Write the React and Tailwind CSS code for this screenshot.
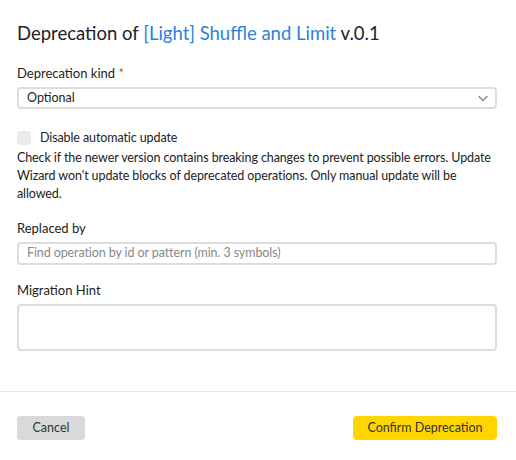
export default function App() {
  return (
    <div className="w-[516px] h-[460px] bg-white text-[#222] flex flex-col" style={{ fontFamily: 'Lato, "Open Sans", sans-serif' }}>
      <div className="pl-[17px] pr-[19px] pt-[20px] flex flex-col">
        <h1 className="text-[18.5px] leading-[26px] h-[26px] font-normal">
          Deprecation of <span className="text-[#2f7fdb]">[Light] Shuffle and Limit</span> v.0.1
        </h1>
        <div className="mt-[18px] text-[13px] leading-[18px] h-[18px]">
          Deprecation kind <span className="text-[#e53935]">*</span>
        </div>
        <div className="mt-[5px] h-[22px] border-2 border-[#dcdcdc] rounded-[4px] flex items-center justify-between pl-[8px] pr-[4px] text-[12.5px]">
          <span>Optional</span>
          <svg width="16" height="16" viewBox="0 0 16 16" fill="none" stroke="#8a8a8a" strokeWidth="1.5">
            <path d="M3.5 6l4.5 4.5 4.5-4.5" />
          </svg>
        </div>
        <div className="mt-[21px] flex items-center gap-[9px] h-[16px] tracking-[-0.1px]">
          <div className="w-[14px] h-[14px] rounded-[3px] bg-[#ebebeb]" />
          <span className="text-[12.5px]">Disable automatic update</span>
        </div>
        <p className="mt-[3px] text-[12.5px] leading-[18px] tracking-[-0.1px]">
          Check if the newer version contains breaking changes to prevent possible errors. Update Wizard won't update blocks of deprecated operations. Only manual update will be allowed.
        </p>
        <div className="mt-[16px] text-[13px] leading-[18px] h-[18px]">Replaced by</div>
        <div className="mt-[5px] h-[23px] border-2 border-[#dcdcdc] rounded-[4px] flex items-center pl-[8px] text-[12.5px] text-[#888] tracking-[-0.1px]">
          Find operation by id or pattern (min. 3 symbols)
        </div>
        <div className="mt-[16px] text-[13px] leading-[18px] h-[18px]">Migration Hint</div>
        <div className="mt-[5px] h-[47px] border-2 border-[#dcdcdc] rounded-[4px]" />
      </div>
      <div className="mt-[40px] h-px bg-[#e6e6e6]" />
      <div className="pl-[17px] pr-[19px] pt-[24px] flex justify-between">
        <button className="w-[68px] h-[24px] rounded-[4px] bg-[#d9d9d9] text-[12.5px] text-[#333]">Cancel</button>
        <button className="w-[144px] h-[24px] rounded-[4px] bg-[#ffd500] text-[12.5px] text-[#333]">Confirm Deprecation</button>
      </div>
    </div>
  );
}
